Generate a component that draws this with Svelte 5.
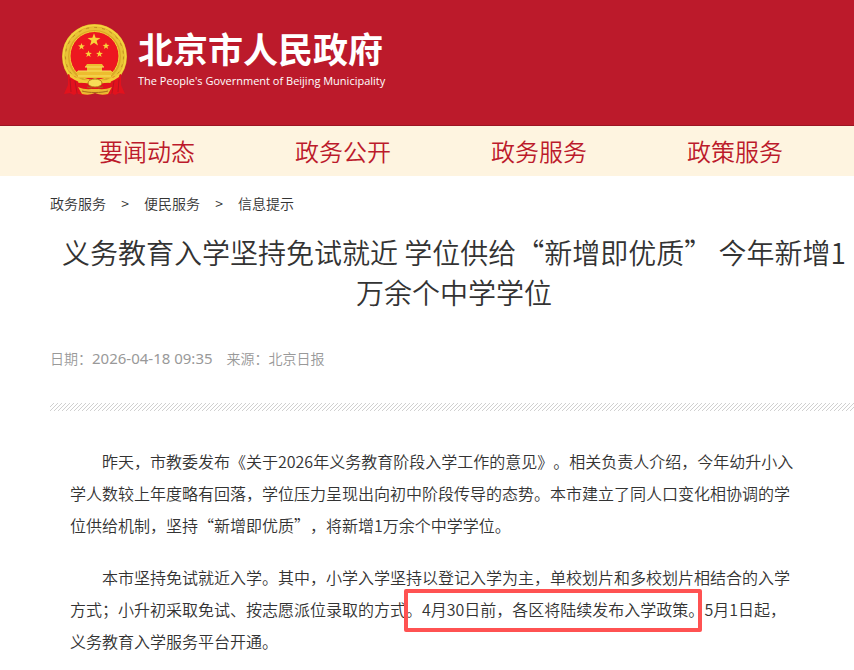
<script lang="ts">
	const channels = ['要闻动态', '政务公开', '政务服务', '政策服务'];
	const crumbs = ['政务服务', '便民服务', '信息提示'];
	const star = 'M0,-10 L2.4,-3.2 L9.5,-3.1 L3.8,1.2 L5.9,8.1 L0,4 L-5.9,8.1 L-3.8,1.2 L-9.5,-3.1 L-2.4,-3.2 Z';
	const stars = [
		{ x: 37, y: 23, size: 0.68 },
		{ x: 24.5, y: 29.5, size: 0.36 },
		{ x: 49, y: 29, size: 0.36 },
		{ x: 31.5, y: 37, size: 0.36 },
		{ x: 42.5, y: 37, size: 0.36 }
	];
</script>

<header class="site-header">
	<a class="brand" href="/">
		<svg class="emblem" viewBox="4 7 67 72" role="img" aria-label="国徽">
			<circle cx="37.5" cy="39.5" r="32.5" fill="#dba827" />
			<circle cx="37.5" cy="39.5" r="31" fill="none" stroke="#f3d43e" stroke-width="2" />
			<circle cx="37.5" cy="39.5" r="28" fill="none" stroke="#e9c236" stroke-width="3" />
			<circle cx="37.5" cy="39.5" r="29" fill="none" stroke="#c18c22" stroke-width="1" stroke-dasharray="3 5" />
			<circle cx="37.5" cy="39" r="24.5" fill="#ed1720" stroke="#f4d335" stroke-width="1" />
			{#each stars as s}
				<path d={star} fill="#f8d33a" transform="translate({s.x} {s.y}) scale({s.size})" />
			{/each}
			<path d="M30 47h15l2 3H28zM30 50h15v4H30zM20 54h35v4H20zM21 58h33v3H21z" fill="#edbd2f" />
			<path d="M28 50h19M21 54h33M21 59h33" stroke="#f8e263" stroke-width="1" />
			<path d="M11 57l8 3 4 9 6 4-3 5-6-2-3 2-4-2-6 1 4-9z" fill="#e2121d" />
			<path d="M64 57l-8 3-4 9-6 4 3 5 6-2 3 2 4-2 6 1-4-9z" fill="#e2121d" />
			<path d="M21 66h33v11l-7 1-9-2-10 2-7-1z" fill="#e2121d" />
			<path d="M13 62l1 13M18 64l2 12M62 62l-1 13M57 64l-2 12" stroke="#b81420" stroke-width="1" />
			<path d="M12 55c8 8 16 9 21 8l5-2 5 2c5 1 12 0 20-8l-1 5c-7 5-14 7-19 6l-5-2-5 2c-6 1-13-1-20-6z" fill="#f2cb38" />
			<path d="M21 70c6 3 11 2 17 2s11 1 17-2l-4 7c-5 1-8 1-13-1-5 2-8 2-13 1z" fill="#ebba31" />
			<ellipse cx="38" cy="66" rx="7" ry="4" fill="#f8dc58" stroke="#b57d17" stroke-width="1" />
			<path d="M25 74c7 2 19 2 26 0M30 70l5 1M46 70l-5 1" fill="none" stroke="#a86818" stroke-width="1" />
		</svg>
		<span class="brand-text">
			<span class="brand-cn">北京市人民政府</span>
			<span class="brand-en" lang="en">The People's Government of Beijing Municipality</span>
		</span>
	</a>
</header>

<nav class="channels" aria-label="频道">
	{#each channels as channel}
		<a href="/">{channel}</a>
	{/each}
</nav>

<main>
	<nav class="crumbs" aria-label="当前位置">
		{#each crumbs as crumb, i}
			{#if i > 0}
				<span class="sep">&gt;</span>
			{/if}
			<a href="/">{crumb}</a>
		{/each}
	</nav>

	<article>
		<h1>义务教育入学坚持免试就近 学位供给“新增即优质” 今年新增1万余个中学学位</h1>
		<div class="meta">
			<span>日期：<time datetime="2026-04-18T09:35">2026-04-18 09:35</time></span>
			<span>来源：北京日报</span>
		</div>
		<svg class="rule" aria-hidden="true">
			<defs>
				<pattern id="hatch" width="4" height="4" patternUnits="userSpaceOnUse">
					<path d="M-1 5L5 -1M-1 1L1 -1M3 5L5 3" stroke="#d0d0d0" stroke-width="1" />
				</pattern>
			</defs>
			<rect width="100%" height="100%" fill="url(#hatch)" />
		</svg>

		<div class="content">
			<p>昨天，市教委发布《关于2026年义务教育阶段入学工作的意见》。相关负责人介绍，今年幼升小入学人数较上年度略有回落，学位压力呈现出向初中阶段传导的态势。本市建立了同人口变化相协调的学位供给机制，坚持“新增即优质”，将新增1万余个中学学位。</p>
			<p>本市坚持免试就近入学。其中，小学入学坚持以登记入学为主，单校划片和多校划片相结合的入学方式；小升初采取免试、按志愿派位录取的方式<mark>。4月30日前，各区将陆续发布入学政策。</mark>5月1日起，义务教育入学服务平台开通。</p>
		</div>
	</article>
</main>

<style>
	:global(body) {
		margin: 0;
		background: #fff;
		color: #333;
		font-family: 'Noto Sans CJK SC', sans-serif;
		font-weight: 350;
		text-spacing-trim: space-all;
		text-autospace: no-autospace;
	}

	a {
		color: inherit;
		text-decoration: none;
	}

	.site-header {
		padding: 24px 61px 29px;
		background: #bc1a2b;
		border-bottom: 1px solid #9c1524;
	}

	.brand {
		display: flex;
		align-items: center;
		gap: 10px;
		color: #fff;
	}

	.emblem {
		width: 67px;
		height: 72px;
	}

	.brand-text {
		display: flex;
		flex-direction: column;
		padding-top: 2px;
		white-space: nowrap;
	}

	.brand-cn {
		font-size: 35px;
		font-weight: 700;
		line-height: 40px;
	}

	.brand-en {
		font-family: 'Open Sans', sans-serif;
		font-size: 11px;
		font-weight: 400;
		line-height: 26px;
	}

	.channels {
		display: grid;
		grid-template-columns: repeat(4, 1fr);
		padding: 0 21px 0 49px;
		background: #fef4e0;
		color: #bc1a2b;
		font-size: 24px;
		line-height: 50px;
		text-align: center;
	}

	main {
		padding-left: 50px;
	}

	.crumbs {
		display: flex;
		padding: 15px 0 16px;
		font-size: 14px;
		line-height: 24px;
	}

	.sep {
		width: 38px;
		text-align: center;
	}

	h1 {
		margin: 0;
		padding: 1px 0 0 4px;
		font-size: 28px;
		font-weight: 350;
		line-height: 40px;
		text-align: center;
	}

	.meta {
		display: flex;
		gap: 14px;
		padding: 34px 0 33px;
		color: #999;
		font-size: 14px;
		line-height: 24px;
	}

	.meta time {
		font-family: 'Noto Sans', sans-serif;
		font-size: 15px;
		font-weight: 400;
	}

	.rule {
		display: block;
		width: 100%;
		height: 8px;
	}

	.content {
		padding: 34px 54px 0 20px;
	}

	.content p {
		margin: 0 0 20px;
		font-size: 16px;
		line-height: 32px;
		text-indent: 32px;
	}

	mark {
		position: relative;
		background: none;
		color: inherit;
	}

	/* red frame drawn over the highlighted sentence */
	mark::after {
		content: '';
		position: absolute;
		inset: -8px 2px -11px -2px;
		border: 4px solid #ff5252;
		border-radius: 2px;
	}
</style>
